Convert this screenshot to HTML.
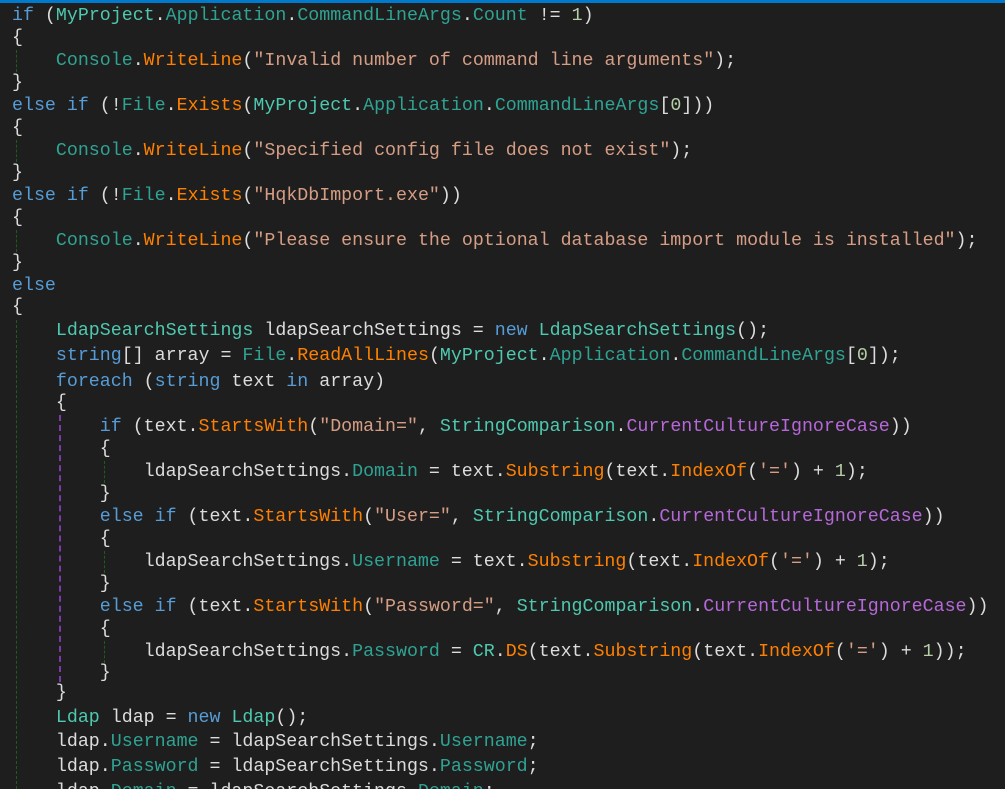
<!DOCTYPE html>
<html><head><meta charset="utf-8"><style>
html,body{margin:0;padding:0;background:#1e1e1e;width:1005px;height:789px;overflow:hidden;position:relative}
#bar{position:absolute;left:0;top:0;width:1005px;height:3px;background:#007acc}
.l{position:absolute;left:12px;height:22px;line-height:22px;white-space:pre;font-family:"Liberation Mono","DejaVu Sans Mono",monospace;font-size:18.3px;color:#dcdcdc}
.k{color:#569cd6}.t{color:#4ec9b0}.c{color:#2fa393}.m{color:#ff8000}.s{color:#d69d85}.e{color:#b668d9}.n{color:#b5cea8}
.g{position:absolute;width:0;border-left:1px dashed #1f5a1f}
.pu{position:absolute;width:0;border-left:2px dashed #7a3aa8}
</style></head><body>
<div id="bar"></div>
<div class="g" style="left:16px;top:50px;height:22px"></div>
<div class="g" style="left:16px;top:140px;height:22px"></div>
<div class="g" style="left:16px;top:230px;height:22px"></div>
<div class="g" style="left:16px;top:320px;height:469px"></div>
<div class="pu" style="left:59px;top:415px;height:267px"></div>
<div class="g" style="left:104px;top:461px;height:22px"></div>
<div class="g" style="left:104px;top:551px;height:22px"></div>
<div class="g" style="left:104px;top:641px;height:22px"></div>

<div class="l" style="top:5px"><span class="k">if</span> (<span class="t">MyProject</span>.<span class="c">Application</span>.<span class="c">CommandLineArgs</span>.<span class="c">Count</span> != <span class="n">1</span>)</div>
<div class="l" style="top:27px">{</div>
<div class="l" style="top:50px">    <span class="c">Console</span>.<span class="m">WriteLine</span>(<span class="s">"Invalid number of command line arguments"</span>);</div>
<div class="l" style="top:72px">}</div>
<div class="l" style="top:95px"><span class="k">else if</span> (!<span class="c">File</span>.<span class="m">Exists</span>(<span class="t">MyProject</span>.<span class="c">Application</span>.<span class="c">CommandLineArgs</span>[<span class="n">0</span>]))</div>
<div class="l" style="top:117px">{</div>
<div class="l" style="top:140px">    <span class="c">Console</span>.<span class="m">WriteLine</span>(<span class="s">"Specified config file does not exist"</span>);</div>
<div class="l" style="top:162px">}</div>
<div class="l" style="top:185px"><span class="k">else if</span> (!<span class="c">File</span>.<span class="m">Exists</span>(<span class="s">"HqkDbImport.exe"</span>))</div>
<div class="l" style="top:207px">{</div>
<div class="l" style="top:230px">    <span class="c">Console</span>.<span class="m">WriteLine</span>(<span class="s">"Please ensure the optional database import module is installed"</span>);</div>
<div class="l" style="top:252px">}</div>
<div class="l" style="top:275px"><span class="k">else</span></div>
<div class="l" style="top:296px">{</div>
<div class="l" style="top:320px">    <span class="t">LdapSearchSettings</span> ldapSearchSettings = <span class="k">new</span> <span class="t">LdapSearchSettings</span>();</div>
<div class="l" style="top:345px">    <span class="k">string</span>[] array = <span class="c">File</span>.<span class="m">ReadAllLines</span>(<span class="t">MyProject</span>.<span class="c">Application</span>.<span class="c">CommandLineArgs</span>[<span class="n">0</span>]);</div>
<div class="l" style="top:371px">    <span class="k">foreach</span> (<span class="k">string</span> text <span class="k">in</span> array)</div>
<div class="l" style="top:392px">    {</div>
<div class="l" style="top:416px">        <span class="k">if</span> (text.<span class="m">StartsWith</span>(<span class="s">"Domain="</span>, <span class="t">StringComparison</span>.<span class="e">CurrentCultureIgnoreCase</span>))</div>
<div class="l" style="top:438px">        {</div>
<div class="l" style="top:461px">            ldapSearchSettings.<span class="c">Domain</span> = text.<span class="m">Substring</span>(text.<span class="m">IndexOf</span>(<span class="s">'='</span>) + <span class="n">1</span>);</div>
<div class="l" style="top:483px">        }</div>
<div class="l" style="top:506px">        <span class="k">else if</span> (text.<span class="m">StartsWith</span>(<span class="s">"User="</span>, <span class="t">StringComparison</span>.<span class="e">CurrentCultureIgnoreCase</span>))</div>
<div class="l" style="top:528px">        {</div>
<div class="l" style="top:551px">            ldapSearchSettings.<span class="c">Username</span> = text.<span class="m">Substring</span>(text.<span class="m">IndexOf</span>(<span class="s">'='</span>) + <span class="n">1</span>);</div>
<div class="l" style="top:573px">        }</div>
<div class="l" style="top:596px">        <span class="k">else if</span> (text.<span class="m">StartsWith</span>(<span class="s">"Password="</span>, <span class="t">StringComparison</span>.<span class="e">CurrentCultureIgnoreCase</span>))</div>
<div class="l" style="top:618px">        {</div>
<div class="l" style="top:641px">            ldapSearchSettings.<span class="c">Password</span> = <span class="t">CR</span>.<span class="m">DS</span>(text.<span class="m">Substring</span>(text.<span class="m">IndexOf</span>(<span class="s">'='</span>) + <span class="n">1</span>));</div>
<div class="l" style="top:662px">        }</div>
<div class="l" style="top:682px">    }</div>
<div class="l" style="top:707px">    <span class="t">Ldap</span> ldap = <span class="k">new</span> <span class="t">Ldap</span>();</div>
<div class="l" style="top:731px">    ldap.<span class="c">Username</span> = ldapSearchSettings.<span class="c">Username</span>;</div>
<div class="l" style="top:756px">    ldap.<span class="c">Password</span> = ldapSearchSettings.<span class="c">Password</span>;</div>
<div class="l" style="top:781px">    ldap.<span class="c">Domain</span> = ldapSearchSettings.<span class="c">Domain</span>;</div>
</body></html>
